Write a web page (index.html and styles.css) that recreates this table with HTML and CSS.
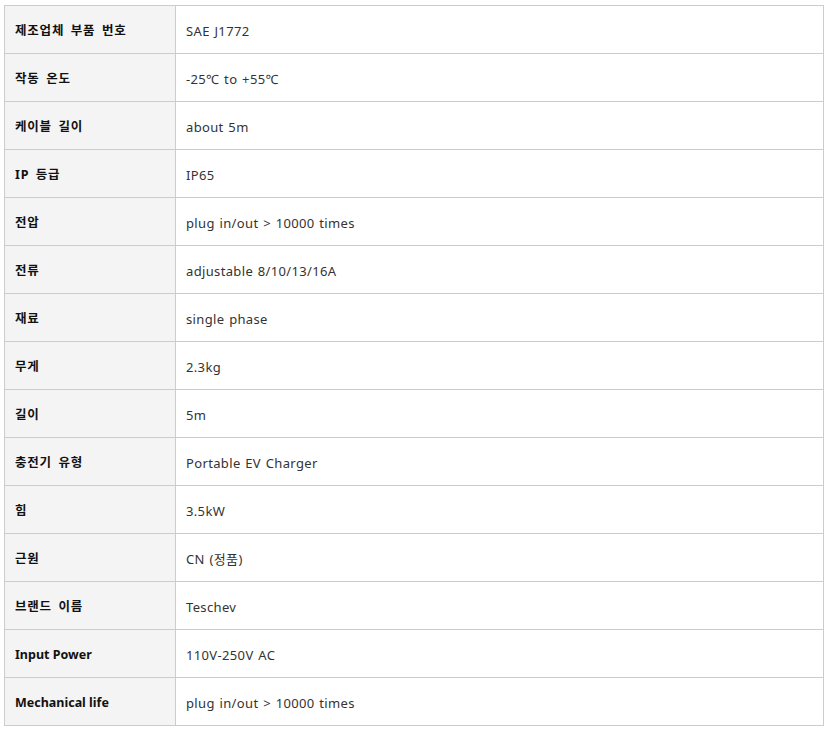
FILE: index.html
```html
<!DOCTYPE html>
<html lang="ko">
<head>
<meta charset="utf-8">
<link rel="stylesheet" href="styles.css">
</head>
<body>
<table class="spec">
<tbody>
<tr><th class="ko">제조업체 부품 번호</th><td>SAE J1772</td></tr>
<tr><th class="ko">작동 온도</th><td>-25℃ to +55℃</td></tr>
<tr><th class="ko">케이블 길이</th><td>about 5m</td></tr>
<tr><th class="ko">IP 등급</th><td>IP65</td></tr>
<tr><th class="ko">전압</th><td>plug in/out &gt; 10000 times</td></tr>
<tr><th class="ko">전류</th><td>adjustable 8/10/13/16A</td></tr>
<tr><th class="ko">재료</th><td>single phase</td></tr>
<tr><th class="ko">무게</th><td>2.3kg</td></tr>
<tr><th class="ko">길이</th><td>5m</td></tr>
<tr><th class="ko">충전기 유형</th><td>Portable EV Charger</td></tr>
<tr><th class="ko">힘</th><td>3.5kW</td></tr>
<tr><th class="ko">근원</th><td>CN (정품)</td></tr>
<tr><th class="ko">브랜드 이름</th><td>Teschev</td></tr>
<tr><th>Input Power</th><td>110V-250V AC</td></tr>
<tr><th>Mechanical life</th><td>plug in/out &gt; 10000 times</td></tr>
</tbody>
</table>
</body>
</html>
```
FILE: styles.css
```css
html, body {
  margin: 0;
  padding: 0;
  background: #ffffff;
}
body {
  padding: 5px 0 0 4px;
  font-family: "Noto Sans", "Noto Sans CJK KR", sans-serif;
  font-size: 13px;
  color: #333333;
}
.spec {
  border-collapse: collapse;
  width: 820px;
  table-layout: fixed;
}
.spec th,
.spec td {
  border: 1px solid #cccccc;
  height: 48px;
  padding: 2px 10px 0;
  box-sizing: border-box;
  text-align: left;
  vertical-align: middle;
  line-height: 16px;
}
.spec th {
  width: 171px;
  background: #f4f4f4;
  font-weight: bold;
  font-size: 12.5px;
  color: #111111;
}
.spec th.ko {
  letter-spacing: 0.8px;
  word-spacing: 2.5px;
}
.spec td {
  font-weight: normal;
  letter-spacing: 0.35px;
  word-spacing: 1px;
}
```
